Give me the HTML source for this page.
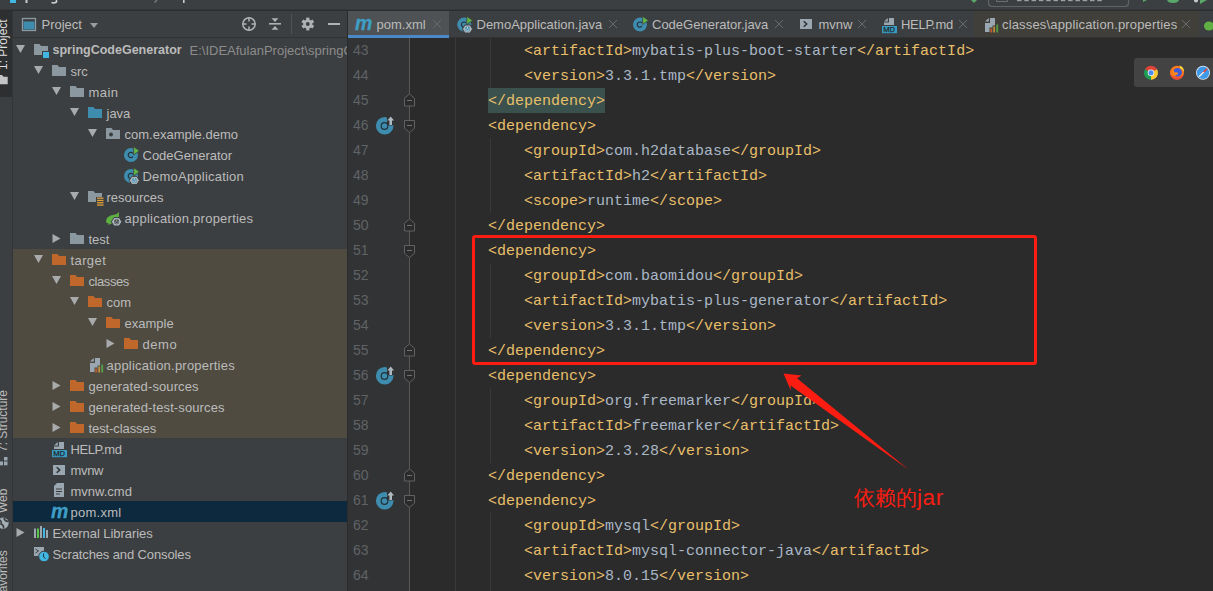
<!DOCTYPE html><html><head><meta charset="utf-8"><style>
*{margin:0;padding:0;box-sizing:border-box}
html,body{width:1213px;height:591px;overflow:hidden;background:#3c3f41;font-family:"Liberation Sans",sans-serif}
.a{position:absolute}
.vt{position:absolute;transform-origin:0 0;transform:rotate(-90deg);font-size:12px;color:#bbbbbb;white-space:nowrap;line-height:12px;height:12px}
.row{position:absolute;left:13px;width:334px;height:21px;font-size:13px;color:#bbbbbb;line-height:21px;white-space:nowrap;overflow:hidden}
.t{position:absolute;top:0.5px}
svg{position:absolute}
.tab{position:absolute;top:12px;height:26px;font-size:13px;color:#bbbbbb;line-height:26px;white-space:nowrap}
.ln{position:absolute;left:330px;width:38.5px;text-align:right;font-size:14px;color:#606366;height:25px;line-height:25px}
.cl{position:absolute;left:416px;height:25px;line-height:25px;font-family:"Liberation Mono",monospace;font-size:15px;color:#a9b7c6;white-space:pre}
.g{color:#e8bf6a}
</style></head><body>
<div class="a" style="left:0px;top:0px;width:1213px;height:9px;background:#3c3f41;"></div>
<div class="a" style="left:0px;top:9px;width:1213px;height:1px;background:#34373a;"></div>
<div class="a" style="left:0px;top:10px;width:1213px;height:1px;background:#2b2d2f;"></div>
<div class="a" style="left:0px;top:11px;width:12px;height:580px;background:#3c3f41;"></div>
<div class="a" style="left:0px;top:11px;width:12px;height:86px;background:#2d2f30;"></div>
<div class="a" style="left:12px;top:11px;width:1px;height:580px;background:#333537;"></div>
<div class="a" style="left:13px;top:11px;width:334px;height:26px;background:#3c3f41;"></div>
<div class="a" style="left:13px;top:37px;width:334px;height:1px;background:#323232;"></div>
<div class="a" style="left:13px;top:38px;width:334px;height:553px;background:#3c3f41;"></div>
<div class="a" style="left:347px;top:11px;width:1px;height:580px;background:#2b2b2b;"></div>
<div class="a" style="left:348px;top:11px;width:865px;height:26px;background:#3c3f41;"></div>
<div class="a" style="left:348px;top:37px;width:865px;height:1px;background:#323232;"></div>
<div class="a" style="left:348px;top:38px;width:865px;height:553px;background:#2b2b2b;"></div>
<div class="a" style="left:348px;top:38px;width:62px;height:553px;background:#313335;"></div>
<div class="vt" style="left:-3px;top:69.5px;color:#dddddd">1: Project</div>
<div class="vt" style="left:-3px;top:452px">7: Structure</div>
<div class="vt" style="left:-3px;top:513px">Web</div>
<div class="vt" style="left:-3px;top:613px">2: Favorites</div>
<div class="a" style="left:41.5px;top:11.7px;height:26px;line-height:26px;font-size:13px;color:#bbbbbb">Project</div>
<div class="row" style="top:39px;">
<span class="t" style="left:39.5px;font-weight:bold;font-size:12.5px;">springCodeGenerator</span>
<span class="t" style="left:176.5px;color:#8c8c8c">E:\IDEAfulanProject\springC</span>
</div>
<div class="row" style="top:60px;">
<span class="t" style="left:57.5px;">src</span>
</div>
<div class="row" style="top:81px;">
<span class="t" style="left:75.5px;letter-spacing:0.433px;">main</span>
</div>
<div class="row" style="top:102px;">
<span class="t" style="left:93.5px;">java</span>
</div>
<div class="row" style="top:123px;">
<span class="t" style="left:111.5px;">com.example.demo</span>
</div>
<div class="row" style="top:144px;">
<span class="t" style="left:129.5px;">CodeGenerator</span>
</div>
<div class="row" style="top:165px;">
<span class="t" style="left:129.5px;letter-spacing:0.214px;">DemoApplication</span>
</div>
<div class="row" style="top:186px;">
<span class="t" style="left:93.5px;">resources</span>
</div>
<div class="row" style="top:207px;">
<span class="t" style="left:111.5px;letter-spacing:0.238px;">application.properties</span>
</div>
<div class="row" style="top:228px;">
<span class="t" style="left:75.5px;">test</span>
</div>
<div class="row" style="top:249px;background:#4f4b41;">
<span class="t" style="left:57.5px;letter-spacing:0.400px;">target</span>
</div>
<div class="row" style="top:270px;background:#4f4b41;">
<span class="t" style="left:75.5px;letter-spacing:-0.417px;">classes</span>
</div>
<div class="row" style="top:291px;background:#4f4b41;">
<span class="t" style="left:93.5px;">com</span>
</div>
<div class="row" style="top:312px;background:#4f4b41;">
<span class="t" style="left:111.5px;">example</span>
</div>
<div class="row" style="top:333px;background:#4f4b41;">
<span class="t" style="left:129.5px;letter-spacing:0.533px;">demo</span>
</div>
<div class="row" style="top:354px;background:#4f4b41;">
<span class="t" style="left:93.5px;letter-spacing:0.219px;">application.properties</span>
</div>
<div class="row" style="top:375px;background:#4f4b41;">
<span class="t" style="left:75.5px;letter-spacing:0.100px;">generated-sources</span>
</div>
<div class="row" style="top:396px;background:#4f4b41;">
<span class="t" style="left:75.5px;letter-spacing:0.110px;">generated-test-sources</span>
</div>
<div class="row" style="top:417px;background:#4f4b41;">
<span class="t" style="left:75.5px;letter-spacing:-0.091px;">test-classes</span>
</div>
<div class="row" style="top:438px;">
<span class="t" style="left:57.5px;letter-spacing:-0.433px;">HELP.md</span>
</div>
<div class="row" style="top:459px;">
<span class="t" style="left:57.5px;letter-spacing:-0.333px;">mvnw</span>
</div>
<div class="row" style="top:480px;">
<span class="t" style="left:57.5px;">mvnw.cmd</span>
</div>
<div class="row" style="top:501px;background:#0d293e;">
<span class="t" style="left:57.5px;letter-spacing:0.250px;">pom.xml</span>
</div>
<div class="row" style="top:522px;">
<span class="t" style="left:39.5px;letter-spacing:-0.059px;">External Libraries</span>
</div>
<div class="row" style="top:543px;">
<span class="t" style="left:39.5px;letter-spacing:-0.119px;">Scratches and Consoles</span>
</div>
<div class="a" style="left:348px;top:11px;width:101px;height:26px;background:#4e5254;"></div>
<div class="a" style="left:348px;top:35px;width:101px;height:3px;background:#4a88c7;"></div>
<div class="tab" style="left:376.5px;">pom.xml</div>
<div class="tab" style="left:476.5px;">DemoApplication.java</div>
<div class="tab" style="left:652px;">CodeGenerator.java</div>
<div class="tab" style="left:818.5px;">mvnw</div>
<div class="tab" style="left:901px;letter-spacing:-0.3px;">HELP.md</div>
<div class="a" style="left:974px;top:11px;width:225px;height:26px;background:#403f39;"></div>
<div class="tab" style="left:1002px;letter-spacing:0.16px;">classes\application.properties</div>
<div class="ln" style="top:38px">43</div>
<div class="cl" style="top:39px">            <span class="g">&lt;artifactId&gt;</span>mybatis-plus-boot-starter<span class="g">&lt;/artifactId&gt;</span></div>
<div class="ln" style="top:63px">44</div>
<div class="cl" style="top:64px">            <span class="g">&lt;version&gt;</span>3.3.1.tmp<span class="g">&lt;/version&gt;</span></div>
<div class="ln" style="top:88px">45</div>
<div class="a" style="left:488px;top:88px;width:117px;height:25px;background:#3b514d;"></div>
<div class="cl" style="top:89px">        <span class="g">&lt;/dependency&gt;</span><span class="g"></span></div>
<div class="ln" style="top:113px">46</div>
<div class="cl" style="top:114px">        <span class="g">&lt;dependency&gt;</span><span class="g"></span></div>
<div class="ln" style="top:138px">47</div>
<div class="cl" style="top:139px">            <span class="g">&lt;groupId&gt;</span>com.h2database<span class="g">&lt;/groupId&gt;</span></div>
<div class="ln" style="top:163px">48</div>
<div class="cl" style="top:164px">            <span class="g">&lt;artifactId&gt;</span>h2<span class="g">&lt;/artifactId&gt;</span></div>
<div class="ln" style="top:188px">49</div>
<div class="cl" style="top:189px">            <span class="g">&lt;scope&gt;</span>runtime<span class="g">&lt;/scope&gt;</span></div>
<div class="ln" style="top:213px">50</div>
<div class="cl" style="top:214px">        <span class="g">&lt;/dependency&gt;</span><span class="g"></span></div>
<div class="ln" style="top:238px">51</div>
<div class="cl" style="top:239px">        <span class="g">&lt;dependency&gt;</span><span class="g"></span></div>
<div class="ln" style="top:263px">52</div>
<div class="cl" style="top:264px">            <span class="g">&lt;groupId&gt;</span>com.baomidou<span class="g">&lt;/groupId&gt;</span></div>
<div class="ln" style="top:288px">53</div>
<div class="cl" style="top:289px">            <span class="g">&lt;artifactId&gt;</span>mybatis-plus-generator<span class="g">&lt;/artifactId&gt;</span></div>
<div class="ln" style="top:313px">54</div>
<div class="cl" style="top:314px">            <span class="g">&lt;version&gt;</span>3.3.1.tmp<span class="g">&lt;/version&gt;</span></div>
<div class="ln" style="top:338px">55</div>
<div class="cl" style="top:339px">        <span class="g">&lt;/dependency&gt;</span><span class="g"></span></div>
<div class="ln" style="top:363px">56</div>
<div class="cl" style="top:364px">        <span class="g">&lt;dependency&gt;</span><span class="g"></span></div>
<div class="ln" style="top:388px">57</div>
<div class="cl" style="top:389px">            <span class="g">&lt;groupId&gt;</span>org.freemarker<span class="g">&lt;/groupId&gt;</span></div>
<div class="ln" style="top:413px">58</div>
<div class="cl" style="top:414px">            <span class="g">&lt;artifactId&gt;</span>freemarker<span class="g">&lt;/artifactId&gt;</span></div>
<div class="ln" style="top:438px">59</div>
<div class="cl" style="top:439px">            <span class="g">&lt;version&gt;</span>2.3.28<span class="g">&lt;/version&gt;</span></div>
<div class="ln" style="top:463px">60</div>
<div class="cl" style="top:464px">        <span class="g">&lt;/dependency&gt;</span><span class="g"></span></div>
<div class="ln" style="top:488px">61</div>
<div class="cl" style="top:489px">        <span class="g">&lt;dependency&gt;</span><span class="g"></span></div>
<div class="ln" style="top:513px">62</div>
<div class="cl" style="top:514px">            <span class="g">&lt;groupId&gt;</span>mysql<span class="g">&lt;/groupId&gt;</span></div>
<div class="ln" style="top:538px">63</div>
<div class="cl" style="top:539px">            <span class="g">&lt;artifactId&gt;</span>mysql-connector-java<span class="g">&lt;/artifactId&gt;</span></div>
<div class="ln" style="top:563px">64</div>
<div class="cl" style="top:564px">            <span class="g">&lt;version&gt;</span>8.0.15<span class="g">&lt;/version&gt;</span></div>
<svg style="left:0;top:0" width="1213" height="591"><rect x="10" y="0" width="6" height="3" fill="#40b6e0"/><rect x="25.5" y="0" width="2" height="3" fill="#c9c9c9"/><path d="M51.5 2.5q2.5 1 5 -0.5v-2" stroke="#d0d0d0" stroke-width="1.5" fill="none"/><path d="M157 0l-2.5 2.5" stroke="#808080" stroke-width="1.2"/><rect x="183" y="0" width="1.6" height="3" fill="#c9c9c9"/><path d="M971 0h6l-3 3z" fill="#59a869"/><path d="M988.5 -4v6.5q0 4 4 4h132q4 0 4-4v-6.5" stroke="#646464" stroke-width="1.2" fill="none"/><path d="M996.5 -2v3.5h11v-3.5" stroke="#6e6e6e" stroke-width="1" fill="none"/><rect x="1017.0" y="0" width="4.5" height="1.2" fill="#b8b8b8" opacity="0.8"/><rect x="1024.3" y="0" width="4.5" height="1.2" fill="#b8b8b8" opacity="0.8"/><rect x="1031.6" y="0" width="4.5" height="1.2" fill="#b8b8b8" opacity="0.8"/><rect x="1038.9" y="0" width="4.5" height="1.2" fill="#b8b8b8" opacity="0.8"/><rect x="1046.2" y="0" width="4.5" height="1.2" fill="#b8b8b8" opacity="0.8"/><rect x="1053.5" y="0" width="4.5" height="1.2" fill="#b8b8b8" opacity="0.8"/><rect x="1060.8" y="0" width="4.5" height="1.2" fill="#b8b8b8" opacity="0.8"/><rect x="1068.1" y="0" width="4.5" height="1.2" fill="#b8b8b8" opacity="0.8"/><rect x="1075.4" y="0" width="4.5" height="1.2" fill="#b8b8b8" opacity="0.8"/><rect x="1082.7" y="0" width="4.5" height="1.2" fill="#b8b8b8" opacity="0.8"/><rect x="1090.0" y="0" width="4.5" height="1.2" fill="#b8b8b8" opacity="0.8"/><rect x="1097.3" y="0" width="4.5" height="1.2" fill="#b8b8b8" opacity="0.8"/><path d="M1143 0h4l-4 2z" fill="#59a869"/><path d="M1167 0h12q-1 3-6 3t-6-3z" fill="#59a869"/><circle cx="1196" cy="0.5" r="2" fill="#c8c8c8"/><path d="M1200 0h7l-7 4z" fill="#59a869"/><path d="M-4 75h6l1.5 1.8h4.2v7.4h-11.7z" fill="#c2c4c6"/><rect x="4" y="457" width="3.5" height="3.5" fill="#9aa7b0"/><rect x="0" y="461.5" width="3" height="3.8" fill="#9aa7b0"/><rect x="4" y="461.5" width="3.5" height="3.8" fill="#9aa7b0"/><circle cx="3" cy="523.2" r="5.6" fill="#a3aeb5"/><path d="M-1 519.5q3 1.5 2 4.5q3 1 2.5 4.5M4 518q0.5 3 4 3.5" stroke="#3c3f41" stroke-width="1.6" fill="none"/><rect x="22.5" y="18.5" width="13" height="12" fill="none" stroke="#8c9aa3" stroke-width="1.3"/><rect x="23.5" y="21.5" width="11" height="8" fill="#3e8daf"/><path d="M90 23h8l-4 5z" fill="#9a9c9e"/><circle cx="249" cy="24" r="6.2" stroke="#afb1b3" stroke-width="1.5" fill="none"/><path d="M249 17v4.5M249 26.5v4.5M242 24h4.5M251.5 24h4.5" stroke="#afb1b3" stroke-width="1.5"/><path d="M269 23.8h12" stroke="#afb1b3" stroke-width="1.6"/><path d="M271.5 18.2h7l-3.5 3.8z M271.5 29.8h7l-3.5 -3.8z" fill="#afb1b3"/><rect x="291" y="14" width="1" height="20" fill="#505254"/><g transform="translate(307.8 24)" fill="#afb1b3"><circle r="4.6"/><rect x="-1.6" y="-6.4" width="3.2" height="3" transform="rotate(0)"/><rect x="-1.6" y="-6.4" width="3.2" height="3" transform="rotate(60)"/><rect x="-1.6" y="-6.4" width="3.2" height="3" transform="rotate(120)"/><rect x="-1.6" y="-6.4" width="3.2" height="3" transform="rotate(180)"/><rect x="-1.6" y="-6.4" width="3.2" height="3" transform="rotate(240)"/><rect x="-1.6" y="-6.4" width="3.2" height="3" transform="rotate(300)"/><circle r="1.9" fill="#3c3f41"/></g><rect x="328" y="23" width="12" height="2" fill="#afb1b3"/><path d="M16.0 45h9l-4.5 8z" fill="#a8aaac"/><path d="M34 44h5.5l1.5 2h7v9h-14z" fill="#8c98a0"/><rect x="42.5" y="51.5" width="7" height="7" fill="#40b6e0" stroke="#3c3f41" stroke-width="1"/><path d="M34.0 66h9l-4.5 8z" fill="#a8aaac"/><path d="M52 65h5.5l1.5 2h7v9h-14z" fill="#8c98a0"/><path d="M52.0 87h9l-4.5 8z" fill="#a8aaac"/><path d="M70 86h5.5l1.5 2h7v9h-14z" fill="#8c98a0"/><path d="M70.0 108h9l-4.5 8z" fill="#a8aaac"/><path d="M88 107h5.5l1.5 2h7v9h-14z" fill="#3e8daf"/><path d="M88.0 129h9l-4.5 8z" fill="#a8aaac"/><path d="M106 128h5.5l1.5 2h7v9h-14z" fill="#8c98a0"/><circle cx="111" cy="134.5" r="2" fill="#3a3d3f"/><circle cx="131" cy="155" r="7" fill="#3e8daf"/><path d="M132.9 153.4A2.6 2.6 0 1 0 132.9 156.6" stroke="#22303a" stroke-width="1.15" fill="none"/><path d="M133.6 146.6l5.8 4.2l-5.8 4.2z" fill="#62b543" stroke="#3c3f41" stroke-width="0.8"/><circle cx="131" cy="176" r="7" fill="#3e8daf"/><path d="M132.9 174.4A2.6 2.6 0 1 0 132.9 177.6" stroke="#22303a" stroke-width="1.15" fill="none"/><path d="M133.6 167.6l5.8 4.2l-5.8 4.2z" fill="#62b543" stroke="#3c3f41" stroke-width="0.8"/><polygon points="139.40,180.40 136.85,184.46 131.75,184.46 129.20,180.40 131.75,176.34 136.85,176.34" fill="#a9b3ba" stroke="#3c3f41" stroke-width="1"/><circle cx="134.3" cy="180.4" r="2.5" fill="#3e8daf"/><path d="M132.9 179.8A1.6 1.6 0 1 0 135.70000000000002 179.8M134.3 178.20000000000002v1.9" stroke="#d0d6da" stroke-width="0.9" fill="none"/><path d="M70.0 192h9l-4.5 8z" fill="#a8aaac"/><path d="M88 191h5.5l1.5 2h7v9h-14z" fill="#8c98a0"/><rect x="96" y="197" width="8" height="9" fill="#3c3f41"/><rect x="97" y="197.5" width="6.5" height="1.3" fill="#e0a23a"/><rect x="97" y="199.8" width="6.5" height="1.3" fill="#e0a23a"/><rect x="97" y="202.1" width="6.5" height="1.3" fill="#e0a23a"/><rect x="97" y="204.4" width="6.5" height="1.3" fill="#e0a23a"/><path d="M106.3 222.5C105.5 218 109 215.5 113 215C116 214.5 118 213.5 118.8 212C119.6 216 118.5 220 115 222C112 224 109 224.5 106.3 222.5z" fill="#5fb042"/><path d="M108 224.3l3-0.8" stroke="#5fb042" stroke-width="0.8"/><polygon points="121.90,221.80 119.25,226.02 113.95,226.02 111.30,221.80 113.95,217.58 119.25,217.58" fill="#a9b3ba" stroke="#3c3f41" stroke-width="1"/><circle cx="116.6" cy="221.8" r="2.5" fill="#3c3f41"/><path d="M115.19999999999999 221.20000000000002A1.6 1.6 0 1 0 118.0 221.20000000000002M116.6 219.60000000000002v1.9" stroke="#a9b3ba" stroke-width="0.9" fill="none"/><path d="M52.5 234.0l8 4.5l-8 4.5z" fill="#a8aaac"/><path d="M70 233h5.5l1.5 2h7v9h-14z" fill="#8c98a0"/><path d="M34.0 255h9l-4.5 8z" fill="#a8aaac"/><path d="M52 254h5.5l1.5 2h7v9h-14z" fill="#c0672c"/><path d="M52.0 276h9l-4.5 8z" fill="#a8aaac"/><path d="M70 275h5.5l1.5 2h7v9h-14z" fill="#c0672c"/><path d="M70.0 297h9l-4.5 8z" fill="#a8aaac"/><path d="M88 296h5.5l1.5 2h7v9h-14z" fill="#c0672c"/><path d="M88.0 318h9l-4.5 8z" fill="#a8aaac"/><path d="M106 317h5.5l1.5 2h7v9h-14z" fill="#c0672c"/><path d="M106.5 339.0l8 4.5l-8 4.5z" fill="#a8aaac"/><path d="M124 338h5.5l1.5 2h7v9h-14z" fill="#c0672c"/><path d="M90 361.6L93.8 358V361.6z" fill="#9aa7b0"/><path d="M95 358H100V372H90V363H95z" fill="#9aa7b0"/><rect x="95" y="368" width="2.2" height="5" fill="#f26522" stroke="#4f4b41" stroke-width="1"/><rect x="98" y="366" width="2.2" height="7" fill="#f4af3d" stroke="#4f4b41" stroke-width="1"/><rect x="101" y="364" width="2.2" height="9" fill="#59c44a" stroke="#4f4b41" stroke-width="1"/><path d="M52.5 381.0l8 4.5l-8 4.5z" fill="#a8aaac"/><path d="M70 380h5.5l1.5 2h7v9h-14z" fill="#c0672c"/><path d="M52.5 402.0l8 4.5l-8 4.5z" fill="#a8aaac"/><path d="M70 401h5.5l1.5 2h7v9h-14z" fill="#c0672c"/><path d="M52.5 423.0l8 4.5l-8 4.5z" fill="#a8aaac"/><path d="M70 422h5.5l1.5 2h7v9h-14z" fill="#c0672c"/><path d="M59 442h5v7h-10v-2.6h5z" fill="#9aa7b0"/><path d="M54 445.6L57.8 442V445.6z" fill="#9aa7b0"/><rect x="52" y="450" width="15" height="7.2" fill="#3a9cc0"/><text x="53.2" y="456.2" font-size="7.6" fill="#1d2930" font-family="Liberation Sans" stroke="#1d2930" stroke-width="0.25">MD</text><rect x="53" y="465" width="12" height="10" fill="#9aa7b0"/><path d="M56.7 467.3l3 2.7l-3 2.7" stroke="#2c3033" stroke-width="1.5" fill="none"/><path d="M57 483h7v14h-10v-11z" fill="#9aa7b0"/><path d="M56 489h6M56 491.5h6M56 494h4" stroke="#3c3f41" stroke-width="1"/><text x="51" y="518" font-size="19.5" font-weight="bold" font-style="italic" fill="#3e9ec5" stroke="#3e9ec5" stroke-width="0.3" font-family="Liberation Sans">m</text><path d="M16.5 528.0l8 4.5l-8 4.5z" fill="#a8aaac"/><rect x="34" y="528.5" width="2" height="9.5" fill="#9aa7b0"/><rect x="37" y="528.5" width="2" height="9.5" fill="#59c44a"/><rect x="40" y="526" width="2" height="12" fill="#9aa7b0"/><rect x="43" y="528" width="2" height="10" fill="#40b6e0"/><rect x="46" y="530" width="2" height="8" fill="#9aa7b0"/><rect x="34" y="547" width="10" height="9" fill="#9aa7b0"/><path d="M35.5 549l3 2l-3 2" stroke="#3c3f41" stroke-width="1" fill="none"/><circle cx="44" cy="556.5" r="5.3" fill="#40b6e0" stroke="#3c3f41" stroke-width="1"/><path d="M43.5 553.5v3.5l2 1.5" stroke="#1f3a48" stroke-width="1" fill="none"/><path d="M433 20l8 8M441 20l-8 8" stroke="#686b6d" stroke-width="1"/><path d="M609 20l8 8M617 20l-8 8" stroke="#686b6d" stroke-width="1"/><path d="M775 20l8 8M783 20l-8 8" stroke="#686b6d" stroke-width="1"/><path d="M858 20l8 8M866 20l-8 8" stroke="#686b6d" stroke-width="1"/><path d="M959 20l8 8M967 20l-8 8" stroke="#686b6d" stroke-width="1"/><path d="M1182 20l8 8M1190 20l-8 8" stroke="#686b6d" stroke-width="1"/><text x="355" y="30" font-size="19.5" font-weight="bold" font-style="italic" fill="#3e9ec5" stroke="#3e9ec5" stroke-width="0.3" font-family="Liberation Sans">m</text><circle cx="464.2" cy="24.6" r="7" fill="#3e8daf"/><path d="M466.09999999999997 23.0A2.6 2.6 0 1 0 466.09999999999997 26.200000000000003" stroke="#22303a" stroke-width="1.15" fill="none"/><path d="M466.8 16.200000000000003l5.8 4.2l-5.8 4.2z" fill="#62b543" stroke="#3c3f41" stroke-width="0.8"/><polygon points="472.60,29.00 470.05,33.06 464.95,33.06 462.40,29.00 464.95,24.94 470.05,24.94" fill="#a9b3ba" stroke="#3c3f41" stroke-width="1"/><circle cx="467.5" cy="29.0" r="2.5" fill="#3e8daf"/><path d="M466.1 28.4A1.6 1.6 0 1 0 468.9 28.4M467.5 26.8v1.9" stroke="#d0d6da" stroke-width="0.9" fill="none"/><circle cx="640" cy="24.6" r="7" fill="#3e8daf"/><path d="M641.9 23.0A2.6 2.6 0 1 0 641.9 26.200000000000003" stroke="#22303a" stroke-width="1.15" fill="none"/><path d="M642.6 16.200000000000003l5.8 4.2l-5.8 4.2z" fill="#62b543" stroke="#3c3f41" stroke-width="0.8"/><rect x="800" y="19" width="12" height="10" fill="#9aa7b0"/><path d="M803.7 21.3l3 2.7l-3 2.7" stroke="#2c3033" stroke-width="1.5" fill="none"/><path d="M889 18h5v7h-10v-2.6h5z" fill="#9aa7b0"/><path d="M884 21.6L887.8 18V21.6z" fill="#9aa7b0"/><rect x="882" y="26" width="15" height="7.2" fill="#3a9cc0"/><text x="883.2" y="32.2" font-size="7.6" fill="#1d2930" font-family="Liberation Sans" stroke="#1d2930" stroke-width="0.25">MD</text><path d="M985 21.6L988.8 18V21.6z" fill="#9aa7b0"/><path d="M990 18H995V32H985V23H990z" fill="#9aa7b0"/><rect x="990" y="28" width="2.2" height="5" fill="#f26522" stroke="#403f39" stroke-width="1"/><rect x="993" y="26" width="2.2" height="7" fill="#f4af3d" stroke="#403f39" stroke-width="1"/><rect x="996" y="24" width="2.2" height="9" fill="#59c44a" stroke="#403f39" stroke-width="1"/><ellipse cx="1209" cy="26" rx="5" ry="4.5" fill="#5fb042"/><rect x="409" y="38" width="1" height="553" fill="#555759"/><rect x="455" y="38" width="1" height="553" fill="#393939"/><path d="M404.5 106.0h10v-7.8l-5-4.2l-5 4.2z" fill="#2b2b2b" stroke="#5f6163" stroke-width="1"/><path d="M407 100.5h5" stroke="#6f7173" stroke-width="1"/><path d="M404.5 120.5h10v7.8l-5 4.2l-5-4.2z" fill="#2b2b2b" stroke="#5f6163" stroke-width="1"/><path d="M407 125.5h5" stroke="#6f7173" stroke-width="1"/><circle cx="384.7" cy="125.7" r="8.8" fill="#3e8daf"/><rect x="387.0" y="115.7" width="8" height="9.3" fill="#313335"/><circle cx="384.5" cy="126.0" r="3.3" fill="#3e8daf" stroke="#22303a" stroke-width="1.2"/><path d="M386.6 120.7l4.1-4.9l4.1 4.9h-2.2v4.8h-3.8v-4.8z" fill="#313335"/><path d="M387.3 120.5l3.4-4.1l3.4 4.1h-2.1v4.6h-2.6v-4.6z" fill="#aeb9c0"/><path d="M404.5 231.0h10v-7.8l-5-4.2l-5 4.2z" fill="#2b2b2b" stroke="#5f6163" stroke-width="1"/><path d="M407 225.5h5" stroke="#6f7173" stroke-width="1"/><path d="M404.5 245.5h10v7.8l-5 4.2l-5-4.2z" fill="#2b2b2b" stroke="#5f6163" stroke-width="1"/><path d="M407 250.5h5" stroke="#6f7173" stroke-width="1"/><path d="M404.5 356.0h10v-7.8l-5-4.2l-5 4.2z" fill="#2b2b2b" stroke="#5f6163" stroke-width="1"/><path d="M407 350.5h5" stroke="#6f7173" stroke-width="1"/><path d="M404.5 370.5h10v7.8l-5 4.2l-5-4.2z" fill="#2b2b2b" stroke="#5f6163" stroke-width="1"/><path d="M407 375.5h5" stroke="#6f7173" stroke-width="1"/><circle cx="384.7" cy="375.7" r="8.8" fill="#3e8daf"/><rect x="387.0" y="365.7" width="8" height="9.3" fill="#313335"/><circle cx="384.5" cy="376.0" r="3.3" fill="#3e8daf" stroke="#22303a" stroke-width="1.2"/><path d="M386.6 370.7l4.1-4.9l4.1 4.9h-2.2v4.8h-3.8v-4.8z" fill="#313335"/><path d="M387.3 370.5l3.4-4.1l3.4 4.1h-2.1v4.6h-2.6v-4.6z" fill="#aeb9c0"/><path d="M404.5 481.0h10v-7.8l-5-4.2l-5 4.2z" fill="#2b2b2b" stroke="#5f6163" stroke-width="1"/><path d="M407 475.5h5" stroke="#6f7173" stroke-width="1"/><path d="M404.5 495.5h10v7.8l-5 4.2l-5-4.2z" fill="#2b2b2b" stroke="#5f6163" stroke-width="1"/><path d="M407 500.5h5" stroke="#6f7173" stroke-width="1"/><circle cx="384.7" cy="500.7" r="8.8" fill="#3e8daf"/><rect x="387.0" y="490.7" width="8" height="9.3" fill="#313335"/><circle cx="384.5" cy="501.0" r="3.3" fill="#3e8daf" stroke="#22303a" stroke-width="1.2"/><path d="M386.6 495.7l4.1-4.9l4.1 4.9h-2.2v4.8h-3.8v-4.8z" fill="#313335"/><path d="M387.3 495.5l3.4-4.1l3.4 4.1h-2.1v4.6h-2.6v-4.6z" fill="#aeb9c0"/><rect x="490" y="38" width="1" height="50" fill="#393939"/><rect x="490" y="138" width="1" height="75" fill="#393939"/><rect x="490" y="263" width="1" height="75" fill="#393939"/><rect x="490" y="388" width="1" height="75" fill="#393939"/><rect x="490" y="513" width="1" height="78" fill="#393939"/><rect x="1134" y="58" width="90" height="29" rx="3" fill="#434343"/><g transform="translate(1151 72.8)"><path d="M0 0L-6.06 -3.50A7 7 0 0 1 6.06 -3.50z" fill="#db4437"/><path d="M0 0L6.06 -3.50A7 7 0 0 1 0.00 7.00z" fill="#fcc934"/><path d="M0 0L0.00 7.00A7 7 0 0 1 -6.06 -3.50z" fill="#1e9e54"/><circle r="3.3" fill="#f1f1f1"/><circle r="2.5" fill="#4c8bf5"/></g><g transform="translate(1177 72.8)"><circle r="7" fill="#ff7a18"/><path d="M-7 0A7 7 0 0 0 7 0A7 4 0 0 1 -7 0z" fill="#e22850" opacity="0.55"/><circle cx="0.6" cy="-0.6" r="4.3" fill="#3b5bdb"/><path d="M-4.2 -2.5q1.5 0.5 1.8 2.2q2.2-0.8 3.8 0.6q-1 2.5-3.5 2.3q-2.2-0.3-2.1-5.1z" fill="#ff8a1c"/><path d="M2.5 -7.2q4.8 1.8 4.6 6.5q-1.2-2.8-4-3.8z" fill="#ffd43b"/></g><g transform="translate(1203 72.8)"><circle r="7" fill="#e8eef6"/><circle r="6.2" fill="#3d9ae8"/><path d="M4 -4L-0.8 0.8L0.8 -0.8z" stroke="#e53935" stroke-width="1.6"/><path d="M-4 4L0.8 -0.8" stroke="#eeeeee" stroke-width="1.4"/></g></svg>
<div class="a" style="left:472px;top:235px;width:565px;height:130px;border:3px solid #fb1d12;border-radius:3px"></div>
<svg style="left:0;top:0" width="1213" height="591"><path d="M783.5 373.5 L801.5 375.5 L797 378.2 L909 470 L790.6 385.6 L790.8 390.5 Z" fill="#fb1d12"/></svg>
<div class="a" style="left:854px;top:484px;font-size:20.8px;line-height:28px;color:#fb1d12;white-space:nowrap">依赖的<span style="font-size:22.5px;letter-spacing:0.6px">jar</span></div>
</body></html>
